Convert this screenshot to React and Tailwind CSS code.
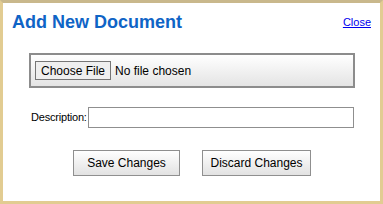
export default function App() {
  return (
    <div className="w-[383px] h-[204px] bg-white border-[3px] border-[#e2cc92] border-t-[#c9b88c] font-['Liberation_Sans',Arial,sans-serif] flex flex-col">
      <div className="flex items-start justify-between pl-[9px] pr-[9px] pt-[8px]">
        <h1 className="text-[18px] leading-[22px] font-bold text-[#0f64c6]">Add New Document</h1>
        <a href="#" className="text-[11px] leading-[13px] text-[#0000ee] underline mt-[5px]">Close</a>
      </div>
      <div className="mt-[20px] ml-[26px] w-[326px] h-[35px] border-2 border-[#8c8c8c] bg-gradient-to-b from-white to-[#e4e4e4] flex items-center pl-[4px]">
        <button className="h-[19px] px-[5px] border border-[#767676] bg-[#efefef] text-[12px] leading-[14px] text-black">Choose File</button>
        <span className="ml-[4px] text-[12px] text-black">No file chosen</span>
      </div>
      <div className="mt-[19px] ml-[28px] flex items-center">
        <span className="w-[57px] text-[11px] text-black whitespace-nowrap tracking-[-0.2px]">Description:</span>
        <input className="w-[266px] h-[21px] border border-[#8f8f8f] bg-white outline-none" />
      </div>
      <div className="mt-[22px] ml-[70px] flex gap-[22px]">
        <button className="w-[107px] h-[26px] border border-[#8f8f8f] bg-gradient-to-b from-white to-[#e2e2e2] text-[12px] text-black">Save Changes</button>
        <button className="w-[109px] h-[26px] border border-[#8f8f8f] bg-gradient-to-b from-white to-[#e2e2e2] text-[12px] text-black">Discard Changes</button>
      </div>
    </div>
  )
}
